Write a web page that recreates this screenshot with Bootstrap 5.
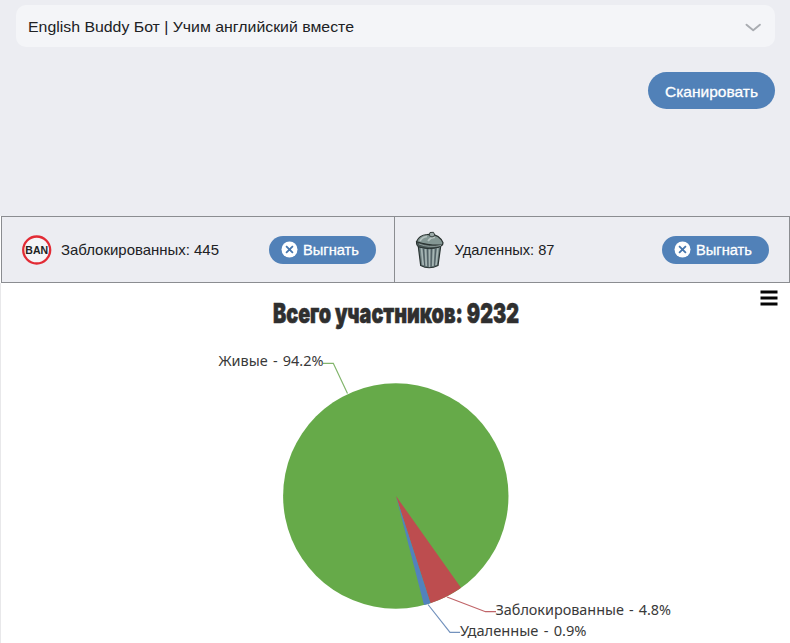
<!DOCTYPE html>
<html lang="ru">
<head>
<meta charset="utf-8">
<meta name="viewport" content="width=device-width, initial-scale=1">
<title>English Buddy Бот</title>
<link rel="stylesheet" href="https://cdn.jsdelivr.net/npm/bootstrap@5.3.0/dist/css/bootstrap.min.css">
<style>
body{width:790px;height:643px;background:#fff;color:#202124;font-family:"Liberation Sans",Arial,sans-serif;font-size:15px;line-height:1.2}
.top-panel{height:216px;background:#ecedf2;padding:5px 15px 0 16px}
.community{height:42px;background:#f4f5f8;border-radius:10px;padding:0 13px 0 12px}
.btn-vk{background:#5181b8;color:#fff;border:0;border-radius:30px;line-height:1}
.btn-vk text{stroke:#fff;stroke-width:.3px}
.btn-vk:hover{background:#4a77ab;color:#fff}
.btn-scan{width:127px;height:37px;margin-top:24.5px;font-size:15px;padding:2px 0 0}
.btn-kick{width:107px;height:28px;font-size:14px;padding:0 0 0 12px;gap:5px}
.stats{height:67px;background:#ecedf2;border:1px solid #8b8d91;margin:0 0 0 1px}
.stat-cell{height:65px}
.stat-first{width:393px;padding:0 18px 0 20px;border-right:1px solid #8b8d91}
.stat-second{padding:0 20px 0 20px}
.chart{height:360px}
svg{display:block;flex:none;overflow:visible}
</style>
<script src="https://cdn.jsdelivr.net/npm/bootstrap@5.3.0/dist/js/bootstrap.bundle.min.js"></script>
</head>
<body class="m-0 overflow-hidden">
<section class="top-panel">
  <div class="community d-flex align-items-center justify-content-between">
    <svg width="330" height="24" viewBox="0 0 330 24"><text x="0" y="17.5" textLength="326" lengthAdjust="spacingAndGlyphs" fill="#202124">English Buddy Бот | Учим английский вместе</text></svg>
    <svg width="18" height="12" viewBox="0 0 18 12"><path d="M2.5 4.7 9.2 10.2 15.9 4.7" fill="none" stroke="#a9acb1" stroke-width="1.9" stroke-linecap="round" stroke-linejoin="round"/></svg>
  </div>
  <div class="d-flex justify-content-end">
    <button class="btn btn-vk btn-scan d-flex align-items-center justify-content-center" type="button"><svg width="94" height="20" viewBox="0 0 94 20"><text x="0" y="15.5" textLength="93" lengthAdjust="spacingAndGlyphs" fill="#fff">Сканировать</text></svg></button>
  </div>
</section>
<section class="stats d-flex">
  <div class="stat-cell stat-first d-flex align-items-center">
    <svg width="30" height="30" viewBox="0 0 30 30"><circle cx="14.7" cy="15" r="13.5" fill="#f5f4f7" stroke="#e22b35" stroke-width="2.3"/><text x="3.3" y="19" font-size="11.3" font-weight="700" textLength="22.8" lengthAdjust="spacingAndGlyphs" fill="#222">BAN</text></svg>
    <svg class="ms-2" width="180" height="24" viewBox="0 0 180 24"><text x="1" y="17" textLength="158" lengthAdjust="spacingAndGlyphs" fill="#202124">Заблокированных: 445</text></svg>
    <button class="btn btn-vk btn-kick d-flex align-items-center ms-auto" type="button">
      <svg width="17" height="17" viewBox="0 0 17 17"><circle cx="8.5" cy="8.5" r="8" fill="#fff"/><path d="m5.1 5.1 6.8 6.8m0-6.8-6.8 6.8" stroke="#4676ad" stroke-width="1.8"/></svg>
      <svg width="57" height="20" viewBox="0 0 57 20"><text x="0" y="15.3" textLength="56" lengthAdjust="spacingAndGlyphs" fill="#fff">Выгнать</text></svg>
    </button>
  </div>
  <div class="stat-cell stat-second d-flex align-items-center flex-fill">
    <svg width="30" height="38" viewBox="0 0 30 38">
      <path d="M3 13 5.7 34.5Q14 39 23 34.5L26 13Z" fill="#6d7f80" stroke="#293332" stroke-width="1.2"/>
      <path d="M6.5 17 8.2 34M10.5 18 11.3 35M14.5 18V36M18.6 18 17.8 35M22.8 17 21 34" stroke="#a6b5b4" stroke-width="1.7"/>
      <path d="M8.4 18 9.7 35M12.5 18 13 36M16.5 18 16 36M20.8 18 19.5 35" stroke="#46545a" stroke-width=".8"/>
      <path d="M1.5 11Q1 16 6 16.5 14 19 23 16.5 28 15 27.5 12L23 13 5 10Z" fill="#4a5857" stroke="#27302f"/>
      <path d="M1.5 10.7Q4 4 12 3.5 24 2 28 11.8L27.5 14Q15 15 1.5 10.7Z" fill="#849794" stroke="#29312f" stroke-width="1.2"/>
      <path d="M5 10Q7 6 12 5.5M13 10Q16 6 20 6.5" fill="none" stroke="#b6c3c1" stroke-width="1.7"/>
      <path d="M14 4.5 15 1.5 18.5 1.3 20 4.5 17 6Z" fill="#9cabaa" stroke="#343e3c"/>
      <path d="M4 13Q14 17 26 14.5" fill="none" stroke="#8e9c9b"/>
    </svg>
    <svg class="ms-2" width="120" height="24" viewBox="0 0 120 24"><text x="1.5" y="17" textLength="100" lengthAdjust="spacingAndGlyphs" fill="#202124">Удаленных: 87</text></svg>
    <button class="btn btn-vk btn-kick d-flex align-items-center ms-auto" type="button">
      <svg width="17" height="17" viewBox="0 0 17 17"><circle cx="8.5" cy="8.5" r="8" fill="#fff"/><path d="m5.1 5.1 6.8 6.8m0-6.8-6.8 6.8" stroke="#4676ad" stroke-width="1.8"/></svg>
      <svg width="57" height="20" viewBox="0 0 57 20"><text x="0" y="15.3" textLength="56" lengthAdjust="spacingAndGlyphs" fill="#fff">Выгнать</text></svg>
    </button>
  </div>
</section>
<section class="chart">
  <svg width="790" height="360" viewBox="0 283 790 360">
    <path d="M.5 283V643" stroke="#e8e8ea"/>
    <path d="M760.5 291.9h17M760.5 298h17M760.5 304h17" stroke="#050505" stroke-width="3"/>
    <text x="273" y="323.3" font-family="Inter, sans-serif" font-size="27" font-weight="900" textLength="246" lengthAdjust="spacingAndGlyphs" fill="#2f2f2f" stroke="#2f2f2f" stroke-width=".6">Всего участников: 9232</text>
    <circle cx="395.8" cy="496" r="112.7" fill="#66aa49"/>
    <path d="M396 496 461 587.8A112.7 112.7 0 0 1 430.5 603.2Z" fill="#bd4d4f"/>
    <path d="M396 496 430.5 603.2A112.7 112.7 0 0 1 424 605Z" fill="#5282bd"/>
    <g fill="none" stroke-width="1.2">
      <path d="M323 363.3H333.3L347.5 393.5" stroke="#82b56c"/>
      <path d="M447 597 485.5 611.7H496" stroke="#c06468"/>
      <path d="M428 604.5 450 632.3H460" stroke="#7392bd"/>
    </g>
    <g font-family="'Noto Sans', sans-serif" font-size="15.3" fill="#393939" word-spacing="1.5">
      <text x="218.5" y="366.3" textLength="105" lengthAdjust="spacingAndGlyphs">Живые - 94.2%</text>
      <text x="495.5" y="614.8" textLength="175.5" lengthAdjust="spacingAndGlyphs">Заблокированные - 4.8%</text>
      <text x="460" y="635.5" textLength="126.5" lengthAdjust="spacingAndGlyphs">Удаленные - 0.9%</text>
    </g>
  </svg>
</section>
</body>
</html>
